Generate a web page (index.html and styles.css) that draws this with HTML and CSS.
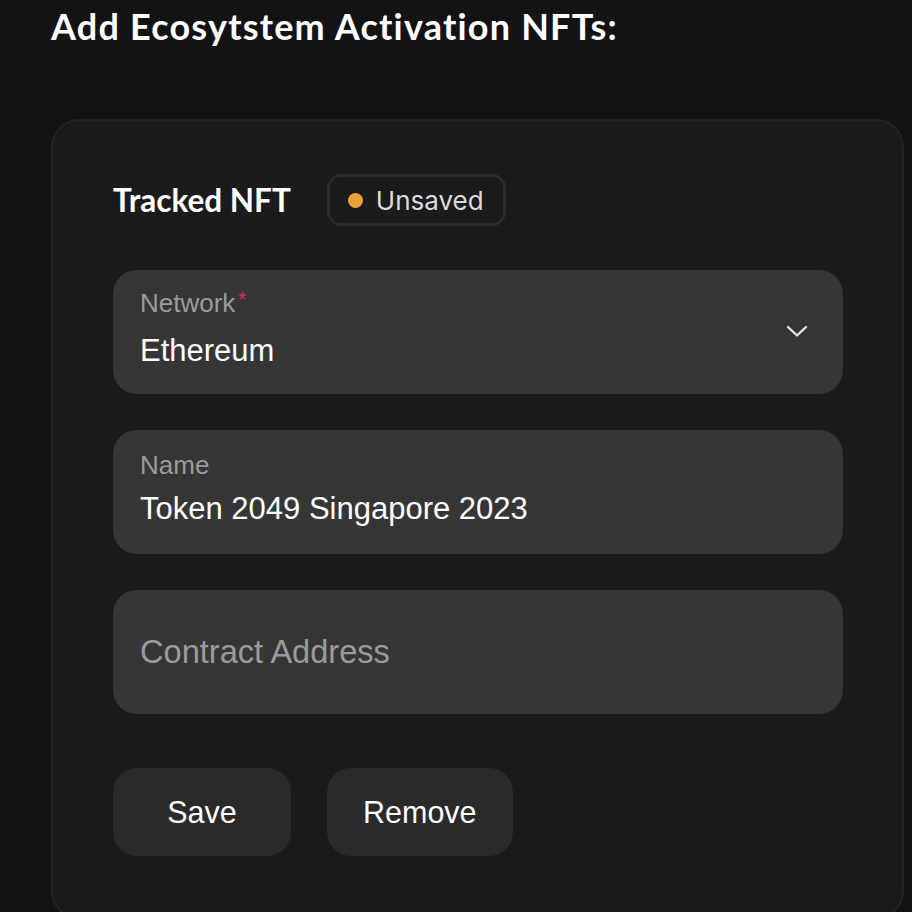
FILE: index.html
```html
<!DOCTYPE html>
<html lang="en">
<head>
<meta charset="utf-8">
<title>Ecosystem Activation NFTs</title>
<link rel="stylesheet" href="styles.css">
</head>
<body>
<main class="page">
  <h1 class="title">Add Ecosytstem Activation NFTs:</h1>
  <section class="card">
    <div class="card-head">
      <h2 class="card-title">Tracked NFT</h2>
      <span class="badge"><span class="dot"></span>Unsaved</span>
    </div>
    <div class="field field-select">
      <div class="field-body">
        <div class="label">Network<span class="req">*</span></div>
        <div class="value">Ethereum</div>
      </div>
      <svg class="chevron" width="22" height="13" viewBox="0 0 22 13" aria-hidden="true">
        <path d="M2 2 L11 10.5 L20 2" fill="none" stroke="#e6e6e6" stroke-width="2.4" stroke-linecap="round" stroke-linejoin="round"/>
      </svg>
    </div>
    <div class="field field-text">
      <div class="field-body">
        <div class="label">Name</div>
        <div class="value">Token 2049 Singapore 2023</div>
      </div>
    </div>
    <div class="field field-empty">
      <div class="placeholder">Contract Address</div>
    </div>
    <div class="actions">
      <button class="btn btn-save">Save</button>
      <button class="btn">Remove</button>
    </div>
  </section>
</main>
</body>
</html>
```
FILE: styles.css
```css
html, body {
  margin: 0;
  padding: 0;
  background: #131315;
  height: 100%;
  overflow: hidden;
}
.page {
  padding: 0 8px 0 51px;
  font-family: "Liberation Sans", Arial, sans-serif;
  color: #fff;
}
.title {
  margin: 0;
  padding-top: 4px;
  font-family: Lato, "Noto Sans", sans-serif;
  font-weight: 700;
  font-size: 36px;
  line-height: 44px;
  color: #fff;
  letter-spacing: 1.2px;
}
.card {
  margin-top: 71px;
  background: #1b1b1d;
  border: 2px solid #242426;
  border-radius: 28px;
  padding: 53px 59px 60px 60px;
  min-height: 800px;
  box-sizing: border-box;
}
.card-head {
  display: flex;
  align-items: center;
  gap: 36px;
  height: 52px;
  margin-bottom: 44px;
}
.card-title {
  margin: 0;
  font-family: Lato, "Noto Sans", sans-serif;
  font-weight: 700;
  font-size: 31.5px;
  color: #fff;
}
.badge {
  display: inline-flex;
  align-items: center;
  gap: 13px;
  height: 52px;
  box-sizing: border-box;
  padding: 0 19px 0 18px;
  border: 3px solid #2c2c2e;
  border-radius: 14px;
  font-family: Inter, "Liberation Sans", sans-serif;
  font-size: 26px;
  color: #dcdcdc;
}
.dot {
  width: 15px;
  height: 15px;
  border-radius: 50%;
  background: #e9a23b;
}
.field {
  display: flex;
  align-items: center;
  height: 124px;
  box-sizing: border-box;
  background: #363636;
  border-radius: 24px;
  padding: 0 35px 0 27px;
  margin-bottom: 36px;
}
.field-body {
  flex: 1;
  align-self: flex-start;
  padding-top: 14px;
}
.field-text .field-body {
  padding-top: 20px;
}
.label {
  font-size: 26px;
  line-height: 30px;
  color: #9b9b9b;
}
.req {
  color: #e3245f;
  font-size: 20px;
  vertical-align: 6px;
  margin-left: 3px;
}
.value {
  margin-top: 15px;
  font-size: 31px;
  line-height: 36px;
  color: #fff;
}
.field-text .value {
  margin-top: 11px;
}
.placeholder {
  font-size: 32.6px;
  line-height: 36px;
  color: #9a9a9e;
}
.chevron {
  display: block;
  margin-top: -1px;
}
.actions {
  display: flex;
  gap: 36px;
  margin-top: 54px;
}
.btn {
  height: 88px;
  min-width: 178px;
  padding: 0 36px;
  border: none;
  border-radius: 24px;
  background: #2a2a2a;
  color: #fff;
  font-family: "Liberation Sans", Arial, sans-serif;
  font-size: 30.5px;
  cursor: pointer;
}
```
